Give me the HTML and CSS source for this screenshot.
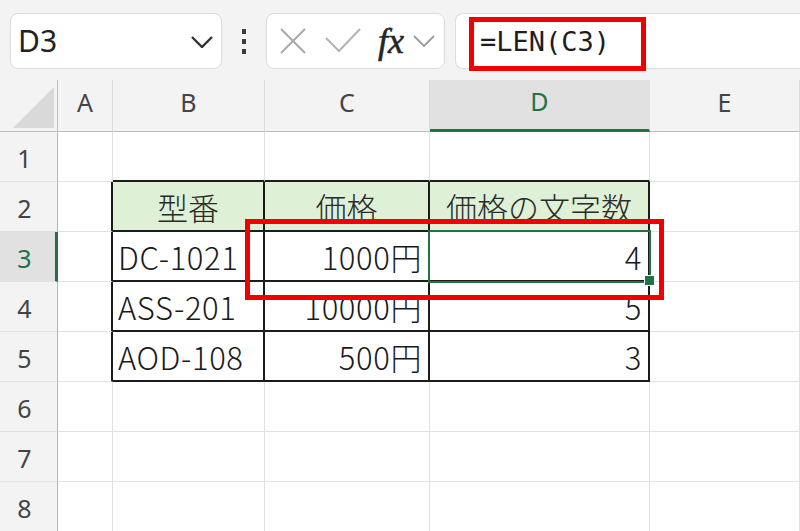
FILE: index.html
```html
<!DOCTYPE html>
<html lang="ja">
<head>
<meta charset="utf-8">
<title>LEN</title>
<link rel="stylesheet" href="styles.css">
</head>
<body>
<div class="page">
  <div class="toolbar">
    <div class="namebox">
      <span class="name">D3</span>
      <svg class="chev" width="22" height="12" viewBox="0 0 22 12"><path d="M1 1 L11 11 L21 1" fill="none" stroke="#333" stroke-width="2.4"/></svg>
    </div>
    <div class="dots"><i></i><i></i><i></i></div>
    <div class="fbtns">
      <svg class="ic-x" width="26" height="26" viewBox="0 0 26 26"><path d="M1 1 L25 25 M25 1 L1 25" stroke="#a9a9a9" stroke-width="2" fill="none"/></svg>
      <svg class="ic-ok" width="36" height="24" viewBox="0 0 36 24"><path d="M1 10 L14 23 L35 1" stroke="#b3b3b3" stroke-width="2" fill="none"/></svg>
      <span class="fx">fx</span>
      <svg class="ic-dd" width="22" height="12" viewBox="0 0 22 12"><path d="M1 1 L11 11 L21 1" stroke="#9a9a9a" stroke-width="1.8" fill="none"/></svg>
    </div>
    <div class="formula">=LEN(C3)</div>
  </div>

  <div class="sheet">
    <div class="ch corner"></div>
    <div class="ch">A</div>
    <div class="ch">B</div>
    <div class="ch">C</div>
    <div class="ch ch-sel">D</div>
    <div class="ch">E</div>

    <div class="rh">1</div>
    <div class="c"></div>
    <div class="c tt"></div>
    <div class="c tt"></div>
    <div class="c tt"></div>
    <div class="c"></div>

    <div class="rh">2</div>
    <div class="c tl"></div>
    <div class="c t hd">型番</div>
    <div class="c t hd">価格</div>
    <div class="c t hd">価格の文字数</div>
    <div class="c"></div>

    <div class="rh rh-sel">3</div>
    <div class="c tl"></div>
    <div class="c t">DC-1021</div>
    <div class="c t num">1000円</div>
    <div class="c t num">4</div>
    <div class="c"></div>

    <div class="rh">4</div>
    <div class="c tl"></div>
    <div class="c t">ASS-201</div>
    <div class="c t num">10000円</div>
    <div class="c t num">5</div>
    <div class="c"></div>

    <div class="rh">5</div>
    <div class="c tl"></div>
    <div class="c t">AOD-108</div>
    <div class="c t num">500円</div>
    <div class="c t num">3</div>
    <div class="c"></div>

    <div class="rh">6</div>
    <div class="c"></div><div class="c"></div><div class="c"></div><div class="c"></div><div class="c"></div>
    <div class="rh">7</div>
    <div class="c"></div><div class="c"></div><div class="c"></div><div class="c"></div><div class="c"></div>
    <div class="rh">8</div>
    <div class="c"></div><div class="c"></div><div class="c"></div><div class="c"></div><div class="c"></div>
  </div>

  <div class="sel"></div>
  <div class="handle"></div>
  <div class="mark mark-formula"></div>
  <div class="mark mark-cell"></div>
</div>
</body>
</html>
```

FILE: styles.css
```css
* { box-sizing: border-box; }
html, body { margin: 0; padding: 0; }
body {
  width: 800px;
  height: 531px;
  overflow: hidden;
  background: #f3f3f3;
  font-family: "Noto Sans", "Open Sans", sans-serif;
}
.page {
  position: relative;
  width: 800px;
  height: 531px;
  overflow: hidden;
}

/* toolbar */
.toolbar {
  height: 80px;
  display: flex;
  align-items: flex-start;
  padding: 13px 0 0 10px;
  background: #f3f3f3;
}
.toolbar > * { flex-shrink: 0; }
.namebox {
  width: 212px;
  height: 56px;
  background: #fff;
  border: 1px solid #dcdcdc;
  border-radius: 8px;
  display: flex;
  align-items: center;
  justify-content: space-between;
  padding: 0 8px 0 7px;
}
.name {
  font-size: 30px;
  color: #222;
  line-height: 1;
}
.chev { display: block; margin-top: 2px; }
.dots {
  width: 44px;
  height: 56px;
  display: flex;
  flex-direction: column;
  align-items: center;
  justify-content: center;
  gap: 5px;
}
.dots i {
  display: block;
  width: 4px;
  height: 5px;
  background: #3c3c3c;
}
.fbtns {
  width: 179px;
  height: 56px;
  background: #fff;
  border: 1px solid #dcdcdc;
  border-radius: 8px;
  display: flex;
  align-items: center;
  padding-left: 13px;
}
.ic-x { display: block; }
.ic-ok { display: block; margin-left: 19px; margin-top: -3px; }
.fx {
  margin-left: 17px;
  font-family: "Liberation Serif", "DejaVu Serif", serif;
  font-style: italic;
  font-weight: normal;
  font-size: 36px;
  color: #262626;
  line-height: 1;
  -webkit-text-stroke: 0.6px #262626;
}
.ic-dd { display: block; margin-left: 9px; }
.formula {
  margin-left: 10px;
  width: 360px;
  height: 56px;
  background: #fff;
  border: 1px solid #dcdcdc;
  border-right: none;
  border-radius: 8px 0 0 8px;
  display: flex;
  align-items: center;
  padding-left: 24px;
  font-family: "DejaVu Sans Mono", "Liberation Mono", monospace;
  font-size: 27px;
  color: #1e1e1e;
}

/* sheet */
.sheet {
  display: grid;
  grid-template-columns: 58px 55px 152px 165px 220px 150px;
  grid-template-rows: 52px repeat(8, 50px);
  background: #fff;
}
.ch {
  background: #f3f3f3;
  border-right: 1px solid #dedede;
  border-bottom: 1px solid #bdbdbd;
  display: flex;
  align-items: center;
  justify-content: center;
  padding-bottom: 8px;
  font-size: 25px;
  color: #444;
}
.corner {
  position: relative;
  border-right: 1px solid #bdbdbd;
}
.corner::after {
  content: "";
  position: absolute;
  left: 13px;
  top: 7px;
  width: 41px;
  height: 41px;
  background: #d9d9d9;
  clip-path: polygon(100% 0, 100% 100%, 0 100%);
}
.ch-sel {
  background: #e1e1e1;
  color: #217346;
  border-bottom: 3px solid #217346;
}
.rh {
  background: #f3f3f3;
  border-right: 1px solid #b5b5b5;
  border-bottom: 1px solid #e1e1e1;
  display: flex;
  align-items: center;
  justify-content: center;
  padding-right: 8px;
  padding-top: 3px;
  font-size: 25px;
  color: #444;
}
.rh-sel {
  background: #e1e1e1;
  color: #217346;
  border-right: 3px solid #217346;
  padding-right: 6px;
}
.c {
  border-right: 1px solid #e1e1e1;
  border-bottom: 1px solid #e1e1e1;
  display: flex;
  align-items: center;
  padding: 0 5px 0 5px;
  font-family: "Noto Sans CJK JP", "Noto Sans", sans-serif;
  font-weight: 300;
  font-size: 31px;
  letter-spacing: 0.6px;
  color: #1a1a1a;
  white-space: nowrap;
  line-height: 1;
}
.tt { border-bottom: 2px solid #1c1c1c; }
.tl { border-right: 2px solid #1c1c1c; }
.t {
  border-right: 2px solid #1c1c1c;
  border-bottom: 2px solid #1c1c1c;
}
.hd {
  background: #def1d6;
  justify-content: center;
  color: #2a2a2a;
  letter-spacing: 0;
}
.num { justify-content: flex-end; padding-right: 6px; }

/* overlays */
.sel {
  position: absolute;
  left: 428px;
  top: 230px;
  width: 223px;
  height: 53px;
  border: 2.5px solid #217346;
}
.handle {
  position: absolute;
  left: 645px;
  top: 276px;
  width: 9px;
  height: 9px;
  background: #217346;
  outline: 1px solid #fff;
}
.mark {
  position: absolute;
  border: 5px solid #f00000;
}
.mark-formula {
  left: 469px;
  top: 17px;
  width: 177px;
  height: 54px;
}
.mark-cell {
  left: 245px;
  top: 219px;
  width: 419px;
  height: 81px;
}
```
